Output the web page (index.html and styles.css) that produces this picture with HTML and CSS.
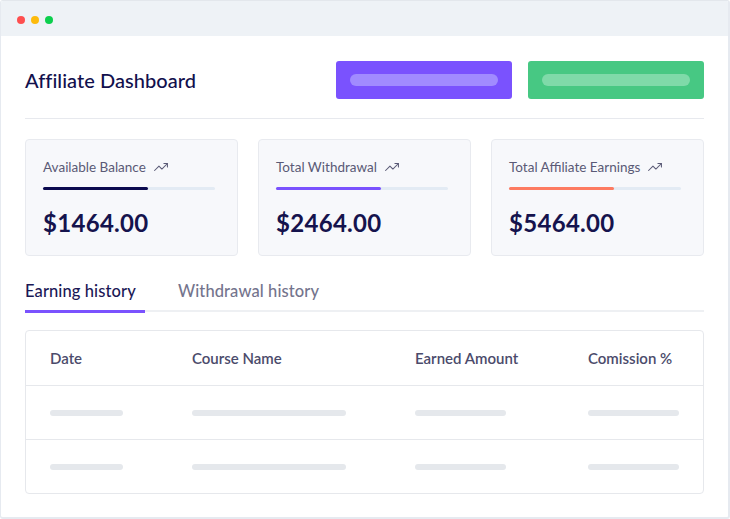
FILE: index.html
```html
<!DOCTYPE html>
<html>
<head>
<meta charset="utf-8">
<link rel="stylesheet" href="styles.css">
</head>
<body>
<div class="window">
  <div class="titlebar">
    <span class="dot red"></span><span class="dot yellow"></span><span class="dot green"></span>
  </div>
  <div class="content">
    <div class="header">
      <h1 class="title">Affiliate Dashboard</h1>
      <div class="actions">
        <div class="btn btn-purple"><span class="pill"></span></div>
        <div class="btn btn-green"><span class="pill"></span></div>
      </div>
    </div>
    <div class="cards">
      <div class="card">
        <div class="label">Available Balance
          <svg class="trend" viewBox="0 0 24 24"><polyline points="23 6 13.5 15.5 8.5 10.5 1 18"/><polyline points="17 6 23 6 23 12"/></svg>
        </div>
        <div class="track"><div class="fill fill-navy" style="width:61%"></div></div>
        <div class="amount">$1464.00</div>
      </div>
      <div class="card">
        <div class="label">Total Withdrawal
          <svg class="trend" viewBox="0 0 24 24"><polyline points="23 6 13.5 15.5 8.5 10.5 1 18"/><polyline points="17 6 23 6 23 12"/></svg>
        </div>
        <div class="track"><div class="fill fill-purple" style="width:61%"></div></div>
        <div class="amount">$2464.00</div>
      </div>
      <div class="card">
        <div class="label">Total Affiliate Earnings
          <svg class="trend" viewBox="0 0 24 24"><polyline points="23 6 13.5 15.5 8.5 10.5 1 18"/><polyline points="17 6 23 6 23 12"/></svg>
        </div>
        <div class="track"><div class="fill fill-coral" style="width:61%"></div></div>
        <div class="amount">$5464.00</div>
      </div>
    </div>
    <div class="tabs">
      <div class="tab active">Earning history</div>
      <div class="tab">Withdrawal history</div>
    </div>
    <div class="table">
      <div class="row head">
        <div>Date</div><div>Course Name</div><div>Earned Amount</div><div>Comission %</div>
      </div>
      <div class="row">
        <div><span class="sk w73"></span></div><div><span class="sk w154"></span></div><div><span class="sk w91"></span></div><div><span class="sk w91"></span></div>
      </div>
      <div class="row">
        <div><span class="sk w73"></span></div><div><span class="sk w154"></span></div><div><span class="sk w91"></span></div><div><span class="sk w91"></span></div>
      </div>
    </div>
  </div>
</div>
</body>
</html>
```

FILE: styles.css
```css
* { box-sizing: border-box; margin: 0; padding: 0; }
html, body { width: 730px; height: 519px; background: #fff; overflow: hidden; }
body { font-family: "Lato", "Noto Sans", sans-serif; }

.window {
  width: 730px;
  height: 519px;
  border-left: 1px solid #e6eaf0;
  border-right: 2px solid #e6eaf0;
  border-bottom: 2px solid #e6eaf0;
  border-top: 1px solid #e3e7ec;
  border-radius: 3px;
  overflow: hidden;
  background: #fff;
}

.titlebar {
  height: 35px;
  background: #eef2f6;
  display: flex;
  align-items: center;
  gap: 6px;
  padding-left: 16px;
  padding-top: 2px;
}
.dot { width: 8px; height: 8px; border-radius: 50%; display: block; }
.red { background: #fe4f4f; }
.yellow { background: #fdbb0c; }
.green { background: #0ccf4d; }

.content { padding: 25px 24px 0 24px; }

.header {
  display: flex;
  align-items: center;
  justify-content: space-between;
  padding-bottom: 19px;
  border-bottom: 1px solid #e7e9ee;
}
.title {
  font-size: 20px;
  font-weight: 500;
  color: #12104d;
  letter-spacing: 0.05px;
}
.actions { display: flex; gap: 16px; }
.btn {
  width: 176px;
  height: 38px;
  border-radius: 3px;
  display: flex;
  align-items: center;
  justify-content: center;
}
.btn-purple { background: #7a52fe; }
.btn-green { background: #47c883; }
.pill { width: 148px; height: 12px; border-radius: 6px; display: block; }
.btn-purple .pill { background: #a18bff; }
.btn-green .pill { background: #7fdaa9; }

.cards {
  display: grid;
  grid-template-columns: 213px 213px 213px;
  justify-content: space-between;
  margin-top: 20px;
}
.card {
  height: 117px;
  background: #f7f8fb;
  border: 1px solid #e8eaef;
  border-radius: 4px;
  padding: 19px 22px 0 17px;
}
.label {
  font-size: 13.5px;
  line-height: 16px;
  color: #5a5a76;
  display: flex;
  align-items: center;
  gap: 8px;
}
.trend {
  width: 14px;
  height: 14px;
  fill: none;
  stroke: #5a5a76;
  stroke-width: 1.8;
  stroke-linecap: round;
  stroke-linejoin: round;
}
.track {
  margin-top: 12px;
  height: 3px;
  width: 172px;
  background: #e3ebf4;
  border-radius: 2px;
}
.fill { height: 3px; border-radius: 2px; }
.fill-navy { background: #0b0a4f; }
.fill-purple { background: #7a52fe; }
.fill-coral { background: #fd7b61; }
.amount {
  margin-top: 18px;
  font-size: 24px;
  line-height: 30px;
  font-weight: 700;
  color: #15134d;
  letter-spacing: 0.3px;
}

.tabs {
  margin-top: 25px;
  display: flex;
  gap: 33px;
  border-bottom: 2px solid #eef0f3;
}
.tab {
  font-size: 16.5px;
  line-height: 20px;
  font-weight: 500;
  color: #74748d;
  padding-bottom: 11px;
  margin-bottom: -2px;
  letter-spacing: 0.1px;
}
.tab.active {
  width: 120px;
  color: #1b1856;
  border-bottom: 3px solid #7a52fe;
  padding-bottom: 8px;
  margin-bottom: -3px;
}

.table {
  margin-top: 18px;
  border: 1px solid #e6e8ec;
  border-radius: 4px;
}
.row {
  display: grid;
  grid-template-columns: 142px 223px 173px 1fr;
  align-items: center;
  height: 54px;
  padding-left: 24px;
  border-top: 1px solid #e6e8ec;
}
.row.head {
  border-top: none;
  font-size: 15px;
  font-weight: 600;
  color: #4b4b6b;
}
.sk { display: block; height: 6px; border-radius: 3px; background: #e5e8ec; }
.w73 { width: 73px; }
.w154 { width: 154px; }
.w91 { width: 91px; }
```
